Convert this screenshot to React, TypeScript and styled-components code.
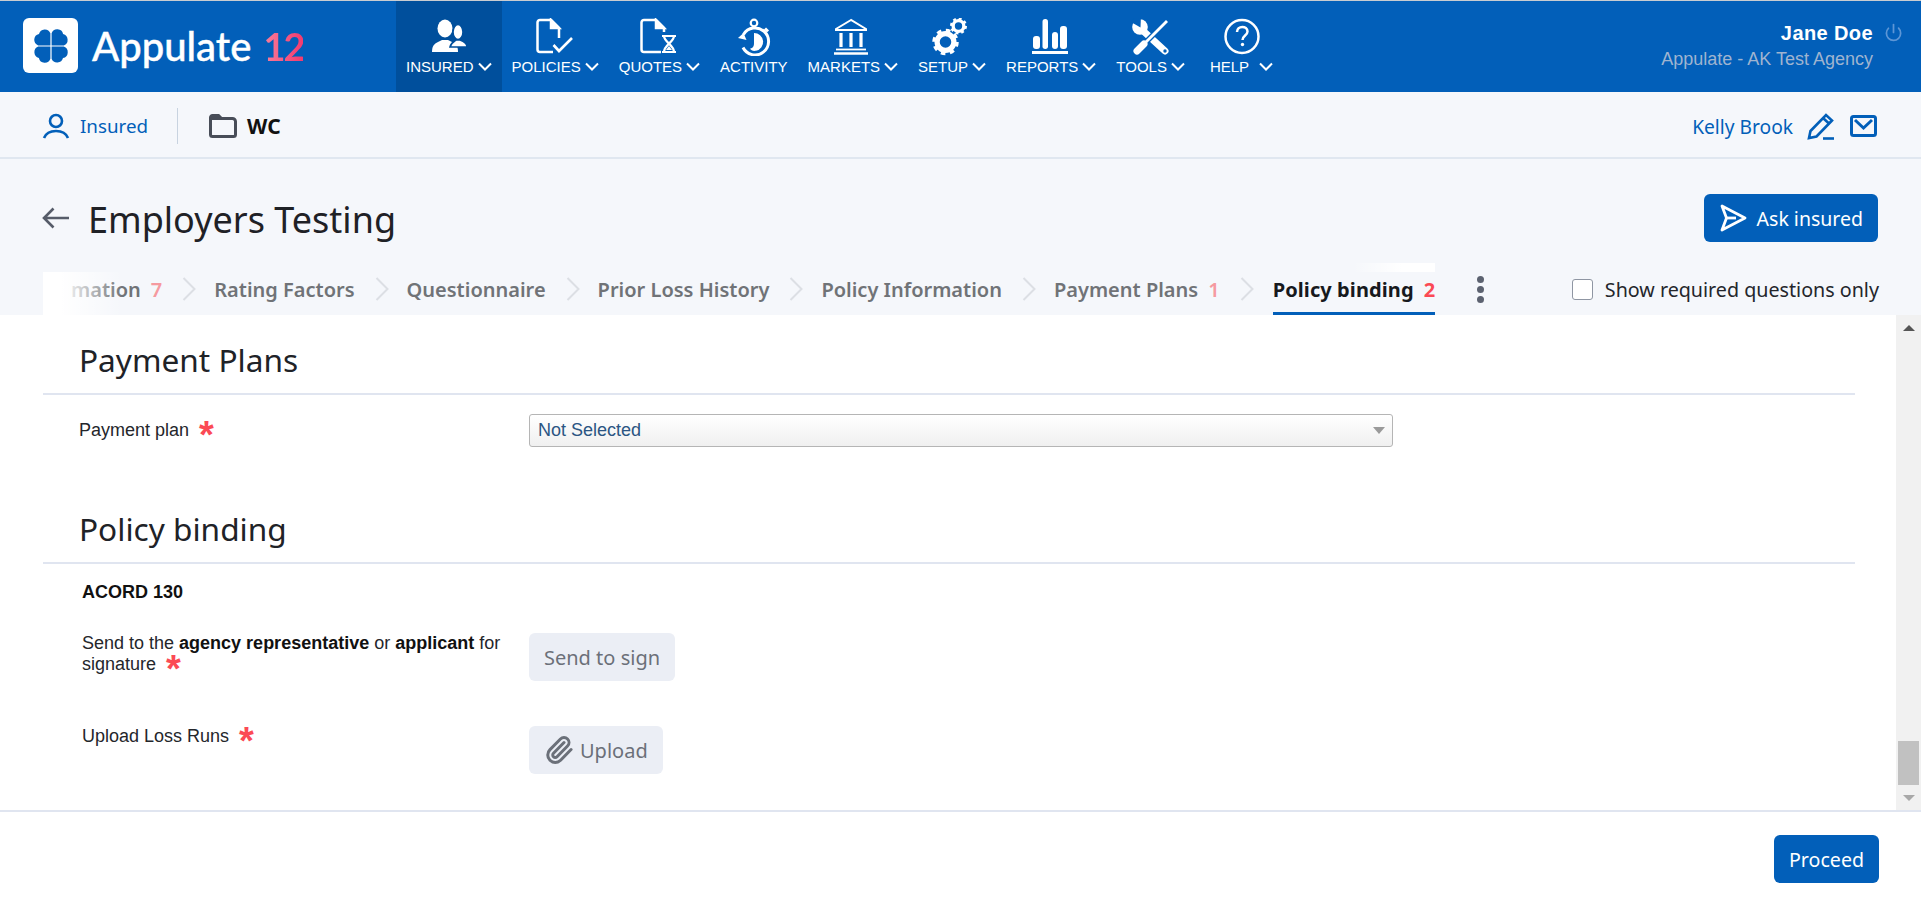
import React from "react";
import styled, { createGlobalStyle } from "styled-components";
import { Paperclip, Power } from "lucide-react";

const BLUE = "#025fb9";
const ACTIVE_BG = "#004f9c";

const GlobalStyle = createGlobalStyle`
  html, body {
    margin: 0;
    padding: 0;
    height: 100%;
    overflow: hidden;
    background: #fff;
    font-family: "Noto Sans", "Liberation Sans", sans-serif;
  }
  * { box-sizing: border-box; }
`;

const Page = styled.div`
  display: flex;
  flex-direction: column;
  height: 905px;
  background: #fff;
`;

const TopBar = styled.header`
  display: flex;
  height: 92px;
  flex: none;
  border-top: 1px solid #c9ccd1;
  background: ${BLUE};
  color: #fff;
`;

const Brand = styled.div`
  display: flex;
  align-items: center;
  width: 396px;
  padding: 0 0 2px 23px;
  flex: none;
`;

const LogoBox = styled.div`
  display: flex;
  align-items: center;
  justify-content: center;
  width: 55px;
  height: 55px;
  border-radius: 6px;
  background: #fff;
`;

const BrandName = styled.span`
  margin-left: 14px;
  font-family: Lato, sans-serif;
  font-size: 40px;
  font-weight: 500;
  -webkit-text-stroke: 0.4px #fff;
`;

const BrandNumber = styled.span`
  margin-left: 12px;
  font-family: Lato, sans-serif;
  font-size: 38px;
  font-weight: 700;
  letter-spacing: -2px;
  background: linear-gradient(90deg, #f87f9b, #f23a6f);
  -webkit-background-clip: text;
  background-clip: text;
  color: transparent;
`;

const Nav = styled.nav`
  display: flex;
  height: 92px;
`;

const NavItem = styled.a<{ $active?: boolean; $wide?: boolean }>`
  display: flex;
  flex-direction: column;
  align-items: center;
  height: 92px;
  margin-left: ${(p) => (p.$wide ? "5px" : "0")};
  padding: 17px 10px 0;
  background: ${(p) => (p.$active ? ACTIVE_BG : "transparent")};
  font-family: "Liberation Sans", Arial, sans-serif;
  font-size: 15px;
  white-space: pre;
`;

const NavLabel = styled.span`
  display: flex;
  align-items: center;
  gap: 4px;
  height: 18px;
  margin-top: 1px;
`;

const HelpGap = styled.span`
  width: 2px;
`;

const Account = styled.div`
  display: flex;
  align-items: flex-start;
  margin-left: auto;
  padding: 20px 18px 0 0;
  font-family: "Liberation Sans", Arial, sans-serif;
`;

const AccountText = styled.div`
  text-align: right;
`;

const AccountName = styled.div`
  font-size: 20px;
  font-weight: 700;
  line-height: 24px;
  letter-spacing: 0.4px;
`;

const AccountAgency = styled.div`
  margin-top: 3px;
  color: #9fb4d0;
  font-size: 18px;
  line-height: 22px;
`;

const PowerWrap = styled.span`
  display: flex;
  margin: 2px 0 0 11px;
  color: #5d96d6;
`;

const SubBar = styled.div`
  display: flex;
  align-items: center;
  height: 67px;
  flex: none;
  padding: 3px 44px 0 42px;
  border-bottom: 2px solid #e0e7f0;
  background: #f5f7fb;
  font-size: 18.8px;
`;

const SubLink = styled.span`
  margin-left: 10px;
  color: ${BLUE};
`;

const SubDivider = styled.span`
  width: 1px;
  height: 36px;
  margin: 0 31px 0 29px;
  background: #c8d3e0;
`;

const CaseName = styled.b`
  margin-left: 10px;
  color: #111;
  font-size: 21px;
`;

const SubRight = styled.div`
  display: flex;
  align-items: center;
  margin-left: auto;
`;

const ContactName = styled.span`
  margin-right: 14px;
  color: ${BLUE};
  font-size: 19.2px;
`;

const MailIcon = styled.svg`
  margin-left: 15px;
`;

const Head = styled.div`
  display: flex;
  align-items: flex-start;
  height: 113px;
  flex: none;
  padding: 35px 43px 0 42px;
  background: #f5f7fb;
`;

const Title = styled.h1`
  margin: 2px 0 0 19px;
  color: #1f2126;
  font-size: 36px;
  font-weight: 400;
  line-height: 48px;
`;

const BackIcon = styled.svg`
  margin-top: 13px;
`;

const AskButton = styled.button`
  display: flex;
  align-items: center;
  gap: 10px;
  height: 48px;
  margin-left: auto;
  padding: 0 15px 0 16px;
  border: 0;
  border-radius: 6px;
  background: ${BLUE};
  color: #fff;
  font-family: inherit;
  font-size: 19.5px;
`;

const TabRow = styled.div`
  display: flex;
  align-items: stretch;
  height: 43px;
  flex: none;
  padding: 0 42px 0 43px;
  background: #f5f7fb;
`;

const TabStrip = styled.div`
  position: relative;
  display: flex;
  align-items: stretch;
  padding-left: 28px;
`;

const LeftFade = styled.span`
  position: absolute;
  top: 0;
  bottom: 0;
  left: 0;
  width: 80px;
  background: linear-gradient(90deg, #fff 22%, rgba(255, 255, 255, 0));
`;

const TopFade = styled.span`
  position: absolute;
  top: -9px;
  right: 0;
  width: 82px;
  height: 9px;
  background: linear-gradient(90deg, rgba(255, 255, 255, 0), #fff 60%);
`;

const Tab = styled.div<{ $active?: boolean }>`
  display: flex;
  gap: 10px;
  margin-left: ${(p) => (p.$active ? "1px" : "0")};
  padding-top: 3px;
  border-bottom: 3px solid ${(p) => (p.$active ? BLUE : "transparent")};
  color: ${(p) => (p.$active ? "#17191d" : "#707377")};
  font-size: 20px;
  font-weight: ${(p) => (p.$active ? 700 : 600)};
  line-height: 30px;
  letter-spacing: ${(p) => (p.$active ? "0.1px" : "0")};
`;

const TabCount = styled.span<{ $faded?: boolean }>`
  color: ${(p) => (p.$faded ? "#f59aa0" : "#fb4a55")};
`;

const TabArrow = styled.svg`
  flex: none;
  margin: 5px 18px 0 20px;
`;

const Kebab = styled.div`
  display: flex;
  flex-direction: column;
  gap: 3px;
  margin: 4px 0 0 42px;
`;

const KebabDot = styled.span`
  width: 7px;
  height: 7px;
  border-radius: 50%;
  background: #5c6270;
`;

const CheckLabel = styled.label`
  display: flex;
  gap: 12px;
  margin-left: auto;
  padding-top: 3px;
  color: #24262b;
  font-size: 19.7px;
  line-height: 30px;
`;

const CheckBox = styled.span`
  width: 21px;
  height: 21px;
  margin-top: 4px;
  border: 1px solid #8f96a3;
  border-radius: 3px;
  background: #fff;
`;

const Middle = styled.div`
  display: flex;
  flex: 1;
  min-height: 0;
`;

const Content = styled.main`
  flex: 1;
  padding: 0 41px 0 43px;
`;

const SectionTitle = styled.h2<{ $first?: boolean }>`
  margin: ${(p) => (p.$first ? "25px 0 0" : "62px 0 0")};
  padding: 0 0 13px 36px;
  border-bottom: 2px solid #e0e5f0;
  color: #202227;
  font-size: 31.6px;
  font-weight: 400;
  line-height: 40px;
`;

const PlanRow = styled.div`
  display: flex;
  align-items: center;
  margin-top: 19px;
  padding-left: 36px;
`;

const Label = styled.div<{ $width: number }>`
  width: ${(p) => p.$width}px;
  flex: none;
  color: #24262b;
  font-family: "Liberation Sans", Arial, sans-serif;
  font-size: 18px;
  line-height: 21px;
`;

const Required = styled.span`
  display: inline-block;
  margin-left: 10px;
  height: 10px;
  color: #fb4a55;
  font-family: "Liberation Sans", Arial, sans-serif;
  font-size: 38px;
  font-weight: 700;
  line-height: 30px;
  vertical-align: top;
`;

const Select = styled.div`
  display: flex;
  align-items: center;
  justify-content: space-between;
  width: 864px;
  height: 33px;
  padding: 0 7px 1px 8px;
  border: 1px solid #b5b5b5;
  border-radius: 3px;
  background: linear-gradient(#fff, #f0f0f0);
  color: #2b5583;
  font-family: "Liberation Sans", Arial, sans-serif;
  font-size: 18px;
`;

const SelectCaret = styled.span`
  width: 0;
  height: 0;
  border-top: 7px solid #9a9a9a;
  border-right: 6px solid transparent;
  border-left: 6px solid transparent;
`;

const FormName = styled.div`
  margin-top: 17px;
  padding-left: 39px;
  color: #111;
  font-family: "Liberation Sans", Arial, sans-serif;
  font-size: 18px;
  font-weight: 700;
  line-height: 22px;
`;

const BindRow = styled.div<{ $gap: number }>`
  display: flex;
  align-items: flex-start;
  margin-top: ${(p) => p.$gap}px;
  padding-left: 39px;
`;

const BindLabel = styled(Label)`
  padding-right: 20px;
  b {
    color: #111;
  }
`;

const GhostButton = styled.button`
  display: flex;
  align-items: center;
  gap: 6px;
  height: 48px;
  padding: 0 15px;
  border: 0;
  border-radius: 6px;
  background: #ebeef5;
  color: #6b7079;
  font-family: inherit;
  font-size: 20px;
`;

const Scrollbar = styled.div`
  display: flex;
  flex-direction: column;
  width: 25px;
  flex: none;
  background: #f1f1f1;
`;

const ScrollStep = styled.div<{ $up?: boolean }>`
  display: flex;
  align-items: center;
  justify-content: center;
  height: 25px;
  &::after {
    content: "";
    border-right: 6px solid transparent;
    border-left: 6px solid transparent;
    ${(p) =>
      p.$up ? "border-bottom: 6px solid #555;" : "border-top: 6px solid #a8a8a8;"}
  }
`;

const ScrollSpace = styled.div`
  flex: 1;
`;

const ScrollThumb = styled.div`
  height: 44px;
  margin: 0 2px;
  background: #c1c1c1;
`;

const Footer = styled.footer`
  display: flex;
  justify-content: flex-end;
  height: 95px;
  flex: none;
  padding: 23px 42px 0 0;
  border-top: 2px solid #e0e5f0;
`;

const ProceedButton = styled.button`
  width: 105px;
  height: 48px;
  border: 0;
  border-radius: 6px;
  background: ${BLUE};
  color: #fff;
  font-family: inherit;
  font-size: 19.6px;
`;

const Leaf = ({ turn }: { turn: number }) => (
  <path
    transform={`rotate(${turn} 19 19)`}
    d="M18.4 18.4V6.2A6 6 0 0 0 7 6.9 6 6 0 0 0 6.2 18.4Z"
    fill={BLUE}
  />
);

const Clover = () => (
  <svg width="38" height="38" viewBox="0 0 38 38">
    <Leaf turn={0} />
    <Leaf turn={90} />
    <Leaf turn={180} />
    <Leaf turn={270} />
  </svg>
);

const Chevron = () => (
  <svg width="14" height="9" viewBox="0 0 14 9" fill="none" stroke="#fff" strokeWidth="2">
    <path d="M1 1.5l6 6 6-6" />
  </svg>
);

const Icon = ({ children }: { children: React.ReactNode }) => (
  <svg width="40" height="38" viewBox="0 0 40 38" fill="none" stroke="#fff" strokeWidth="2.5">
    {children}
  </svg>
);

const InsuredIcon = () => (
  <Icon>
    <g fill="#fff" stroke="none">
      <ellipse cx="16" cy="10.5" rx="7.5" ry="9" />
      <path d="M3 34c0-6 2-8 6-10l4-2h6l4 2c4 2 6 4 6 10Z" />
    </g>
    <g fill="#fff" stroke={ACTIVE_BG} strokeWidth="1.6">
      <ellipse cx="29" cy="14" rx="5" ry="7.5" />
      <path d="M21 29c1-4 3-5 6-7h4c3 1 7 3 7 7Z" />
    </g>
  </Icon>
);

const PoliciesIcon = () => (
  <Icon>
    <path d="M24 20V10l-8-8H5a2.500 2.500 0 0 0-2.500 2.500v27A2.500 2.500 0 0 0 5 34h13" />
    <path d="M16 2v8h8z" fill="#fff" />
    <path d="M18.500 27l5.500 6L37 20" strokeWidth="2.600" />
  </Icon>
);

const QuotesIcon = () => (
  <Icon>
    <path d="M25 14v-4l-8-8H5a2.500 2.500 0 0 0-2.500 2.500v27A2.500 2.500 0 0 0 5 34h17" />
    <path d="M17 2v8h8z" fill="#fff" />
    <path d="M23 18h14M23 34h14M25 18c0 6 10 9 10 16M35 18c0 6-10 9-10 16" strokeWidth="2.200" />
    <path d="M27 32l3-4 3 4z" fill="#fff" stroke="none" />
  </Icon>
);

const ActivityIcon = () => (
  <Icon>
    <circle cx="20" cy="5" r="3.300" strokeWidth="2.200" />
    <path d="M20 8.500v2" strokeWidth="3" />
    <path d="M9.500 16.500a13.500 13.500 0 1 1-.5 13" strokeWidth="3" />
    <path d="M31 10.500l3 3" strokeWidth="3" />
    <path d="M20 15a9 9 0 0 1 2 17.800c-3 .5-5-.5-6-2 4-1 4-4 4-6z" fill="#fff" stroke="none" />
    <path d="M4 20l5.500-5 3 7z" fill="#fff" stroke="none" />
  </Icon>
);

const MarketsIcon = () => (
  <Icon>
    <path d="M18 2L3 11v1h30v-1z" strokeWidth="2" />
    <path d="M8 15v14M18 15v14M28 15v14" strokeWidth="3.200" />
    <path d="M3 31.500h30" strokeWidth="1.800" />
    <path d="M1 35.500h34" strokeWidth="2.400" />
  </Icon>
);

const Gear = ({ cx, cy, r }: { cx: number; cy: number; r: number }) => {
  const tooth = (2 * Math.PI * r) / 16;
  return (
    <g>
      <circle cx={cx} cy={cy} r={r * 0.67} strokeWidth={r * 0.42} />
      <circle
        cx={cx}
        cy={cy}
        r={r * 0.92}
        strokeWidth={r * 0.28}
        strokeDasharray={`${tooth * 0.92} ${tooth * 0.92}`}
      />
    </g>
  );
};

const SetupIcon = () => (
  <Icon>
    <Gear cx={13.500} cy={24} r={12.500} />
    <Gear cx={26.500} cy={8} r={8} />
  </Icon>
);

const ReportsIcon = () => (
  <Icon>
    <g fill="#fff" stroke="none">
      <rect x="2" y="18" width="7" height="13" rx="3" />
      <rect x="11.500" y="1" width="5.500" height="30" rx="2.700" />
      <rect x="21" y="14" width="6" height="17" rx="3" />
      <rect x="29" y="8" width="7" height="23" rx="3" />
      <rect x="1" y="33" width="36" height="3" />
    </g>
  </Icon>
);

const ToolsIcon = () => (
  <Icon>
    <path d="M9 10l25 23" strokeWidth="7" strokeLinecap="round" />
    <circle cx="9" cy="9" r="7.800" fill="#fff" stroke="none" />
    <path d="M9.500 9.500L0 4l4-5 6-1z" fill={BLUE} stroke="none" />
    <circle cx="34" cy="33" r="1.700" fill={BLUE} stroke="none" />
    <path d="M29 10L14 25" strokeWidth="5.500" stroke={BLUE} />
    <path d="M36 3L15 24" strokeWidth="2.800" />
    <path d="M13 26l-7 7" strokeWidth="7" strokeLinecap="round" />
  </Icon>
);

const HelpIcon = () => (
  <Icon>
    <circle cx="20" cy="18.500" r="16.500" />
    <path d="M15 14c0-7 10.500-6.500 10.500-.5 0 4-5 4-5 8.500" />
    <circle cx="20.500" cy="26.500" r="1.700" fill="#fff" stroke="none" />
  </Icon>
);

const TabChevron = () => (
  <TabArrow width="14" height="24" viewBox="0 0 14 24" fill="none" stroke="#dcdfe4" strokeWidth="2">
    <path d="M1.500 1l11 11-11 11" />
  </TabArrow>
);

const navItems = [
  { label: "INSURED", icon: <InsuredIcon />, arrow: true, active: true },
  { label: "POLICIES", icon: <PoliciesIcon />, arrow: true },
  { label: "QUOTES", icon: <QuotesIcon />, arrow: true },
  { label: "ACTIVITY", icon: <ActivityIcon /> },
  { label: "MARKETS", icon: <MarketsIcon />, arrow: true },
  { label: "SETUP", icon: <SetupIcon />, arrow: true },
  { label: "REPORTS", icon: <ReportsIcon />, arrow: true },
  { label: "TOOLS", icon: <ToolsIcon />, arrow: true },
  { label: "HELP", icon: <HelpIcon />, arrow: true, wide: true },
];

const tabs = [
  { label: "mation", count: "7", faded: true },
  { label: "Rating Factors" },
  { label: "Questionnaire" },
  { label: "Prior Loss History" },
  { label: "Policy Information" },
  { label: "Payment Plans", count: "1", faded: true },
  { label: "Policy binding", count: "2", active: true },
];

const App = () => (
  <Page>
    <GlobalStyle />
    <TopBar>
      <Brand>
        <LogoBox>
          <Clover />
        </LogoBox>
        <BrandName>Appulate</BrandName>
        <BrandNumber>12</BrandNumber>
      </Brand>
      <Nav>
        {navItems.map((item) => (
          <NavItem key={item.label} $active={item.active} $wide={item.wide}>
            {item.icon}
            <NavLabel>
              {item.label}
              {item.wide && <HelpGap />}
              {item.arrow && <Chevron />}
            </NavLabel>
          </NavItem>
        ))}
      </Nav>
      <Account>
        <AccountText>
          <AccountName>Jane Doe</AccountName>
          <AccountAgency>Appulate - AK Test Agency</AccountAgency>
        </AccountText>
        <PowerWrap>
          <Power size={19} strokeWidth={2.2} />
        </PowerWrap>
      </Account>
    </TopBar>

    <SubBar>
      <svg width="28" height="26" viewBox="0 0 28 26" fill="none" stroke={BLUE} strokeWidth="2.600">
        <circle cx="14" cy="8" r="6" />
        <path d="M2 25c2-5 7-7 12-7s10 2 12 7" />
      </svg>
      <SubLink>Insured</SubLink>
      <SubDivider />
      <svg width="28" height="24" viewBox="0 0 28 24" fill="none" stroke="#484d58" strokeWidth="3">
        <path d="M1.500 3.500a2 2 0 0 1 2-2h6l3 3h11a3 3 0 0 1 3 3v13a2 2 0 0 1-2 2h-21a2 2 0 0 1-2-2z" />
        <path d="M2 3h9l2 3H2z" fill="#484d58" stroke="none" />
      </svg>
      <CaseName>WC</CaseName>
      <SubRight>
        <ContactName>Kelly Brook</ContactName>
        <svg width="28" height="28" viewBox="0 0 28 28" fill="none" stroke={BLUE} strokeWidth="2.600">
          <path d="M2 26l1.500-7L19 3l6 5.500L9.500 24.500z" />
          <path d="M16 6l6 5.500" />
          <path d="M16 26.500h11" />
        </svg>
        <MailIcon width="27" height="22" viewBox="0 0 27 22" fill="none" stroke={BLUE} strokeWidth="3">
          <rect x="1.500" y="1.500" width="24" height="19" rx="2" />
          <path d="M5 5l8.500 8L22 5" />
        </MailIcon>
      </SubRight>
    </SubBar>

    <Head>
      <BackIcon width="27" height="22" viewBox="0 0 27 22" fill="none" stroke="#565c69" strokeWidth="2.600">
        <path d="M27 11H2M11.500 1.500L2 11l9.500 9.500" />
      </BackIcon>
      <Title>Employers Testing</Title>
      <AskButton>
        <svg width="27" height="28" viewBox="0 0 27 28" fill="none" stroke="#fff" strokeWidth="2.800" strokeLinejoin="round">
          <path d="M2 2l23 12L2 26l4.500-12z" />
          <path d="M6.500 14H16" />
        </svg>
        Ask insured
      </AskButton>
    </Head>

    <TabRow>
      <TabStrip>
        {tabs.map((tab, index) => (
          <React.Fragment key={tab.label}>
            {index > 0 && <TabChevron />}
            <Tab $active={tab.active}>
              {tab.label}
              {tab.count && <TabCount $faded={tab.faded}>{tab.count}</TabCount>}
            </Tab>
          </React.Fragment>
        ))}
        <LeftFade />
        <TopFade />
      </TabStrip>
      <Kebab>
        <KebabDot />
        <KebabDot />
        <KebabDot />
      </Kebab>
      <CheckLabel>
        <CheckBox />
        Show required questions only
      </CheckLabel>
    </TabRow>

    <Middle>
      <Content>
        <SectionTitle $first>Payment Plans</SectionTitle>
        <PlanRow>
          <Label $width={450}>
            Payment plan
            <Required>*</Required>
          </Label>
          <Select>
            Not Selected
            <SelectCaret />
          </Select>
        </PlanRow>

        <SectionTitle>Policy binding</SectionTitle>
        <FormName>ACORD 130</FormName>
        <BindRow $gap={30}>
          <BindLabel $width={447}>
            Send to the <b>agency representative</b> or <b>applicant</b> for
            <br />
            signature
            <Required>*</Required>
          </BindLabel>
          <GhostButton>Send to sign</GhostButton>
        </BindRow>
        <BindRow $gap={45}>
          <BindLabel $width={447}>
            Upload Loss Runs
            <Required>*</Required>
          </BindLabel>
          <GhostButton>
            <Paperclip size={30} strokeWidth={2.4} />
            Upload
          </GhostButton>
        </BindRow>
      </Content>
      <Scrollbar>
        <ScrollStep $up />
        <ScrollSpace />
        <ScrollThumb />
        <ScrollStep />
      </Scrollbar>
    </Middle>

    <Footer>
      <ProceedButton>Proceed</ProceedButton>
    </Footer>
  </Page>
);

export default App;
